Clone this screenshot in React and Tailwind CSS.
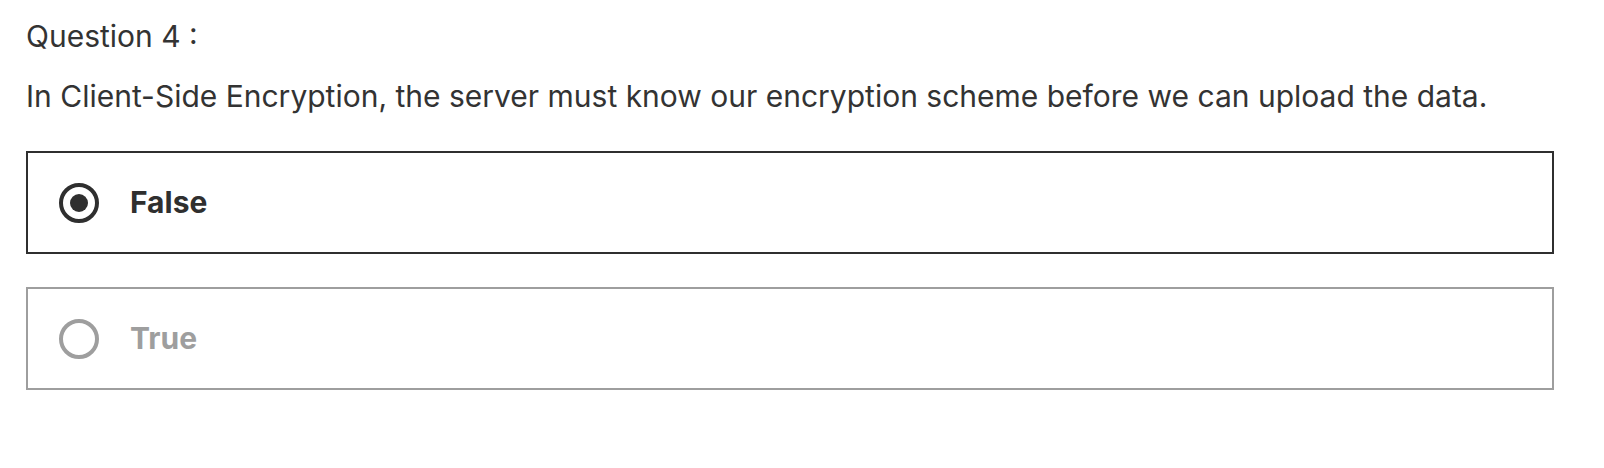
import React, { useState } from 'react';

const options = ['False', 'True'];

const Radio = ({ checked }) => (
  <span
    className={`flex h-[40px] w-[40px] shrink-0 items-center justify-center rounded-full border-[4px] ${
      checked ? 'border-[#2f2f2f]' : 'border-[#9e9e9e]'
    }`}
  >
    {checked && <span className="h-[18px] w-[18px] rounded-full bg-[#2f2f2f]" />}
  </span>
);

const App = () => {
  const [answer, setAnswer] = useState('False');

  return (
    <div className="min-h-[468px] bg-white px-[26px] pt-[14px] font-['Inter',sans-serif] text-[#333]">
      <p className="text-[30px] leading-[44px]">Question 4 :</p>
      <p className="mt-[16px] text-[30px] leading-[44px]">
        In Client-Side Encryption, the server must know our encryption scheme before we can upload the data.
      </p>

      <div className="mt-[33px] flex w-[1528px] flex-col gap-[33px]">
        {options.map((option) => {
          const checked = answer === option;
          return (
            <button
              key={option}
              onClick={() => setAnswer(option)}
              className={`flex h-[103px] items-center gap-[31px] border-2 pl-[31px] text-left ${
                checked ? 'border-[#2f2f2f] text-[#2f2f2f]' : 'border-[#9e9e9e] text-[#9e9e9e]'
              }`}
            >
              <Radio checked={checked} />
              <span className="text-[30px] font-bold">{option}</span>
            </button>
          );
        })}
      </div>
    </div>
  );
};

export default App;
